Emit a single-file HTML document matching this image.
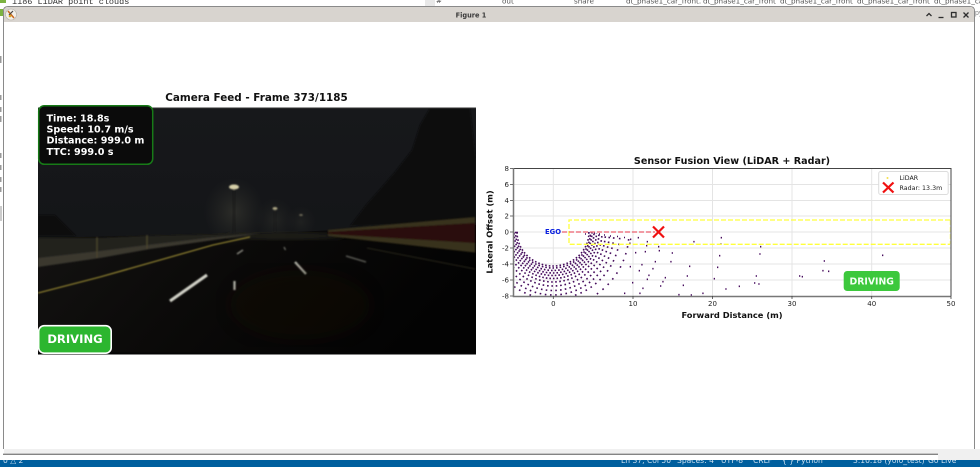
<!DOCTYPE html>
<html><head><meta charset="utf-8"><style>
html,body{margin:0;padding:0;background:#fff;overflow:hidden}
svg{display:block}
text{font-family:"DejaVu Sans",sans-serif}
</style></head><body>
<svg width="980" height="467" viewBox="0 0 980 467" xmlns="http://www.w3.org/2000/svg">
<defs>
<clipPath id="cam"><rect x="38" y="108.500" width="438" height="246"/></clipPath>
<clipPath id="ax"><rect x="513" y="168.500" width="438" height="127.500"/></clipPath>
<clipPath id="arcs"><polygon points="513,232 588,232 631,238 631,296 513,296"/></clipPath>
<clipPath id="st"><rect x="0" y="460" width="980" height="7"/></clipPath>
<filter id="b1"><feGaussianBlur stdDeviation="0.7"/></filter>
<filter id="b0"><feGaussianBlur stdDeviation="0.35"/></filter>
<filter id="b3"><feGaussianBlur stdDeviation="3"/></filter>
<filter id="b8"><feGaussianBlur stdDeviation="8"/></filter>
<linearGradient id="sky" x1="0" y1="0" x2="0" y2="1"><stop offset="0" stop-color="#17181b"/><stop offset="1" stop-color="#111315"/></linearGradient>
<linearGradient id="road" x1="0" y1="0" x2="1" y2="0.25"><stop offset="0" stop-color="#131211"/><stop offset="0.45" stop-color="#0b0a09"/><stop offset="1" stop-color="#030303"/></linearGradient>
<radialGradient id="hz" cx="0.5" cy="0.5" r="0.5"><stop offset="0" stop-color="#3c3c34" stop-opacity=".6"/><stop offset="1" stop-color="#30302b" stop-opacity="0"/></radialGradient>
</defs>
<rect width="980" height="467" fill="#fff"/>

<!-- background editor -->
<text x="12" y="4" font-size="8.500" fill="#333" style="font-family:'Liberation Mono',monospace">1186 LiDAR point clouds</text>
<rect x="425" y="0" width="10" height="6" fill="#e8e8e8"/>
<g font-size="7.200" fill="#555" style="font-family:'Liberation Sans',sans-serif">
<text x="436" y="3">#</text><text x="502" y="3.500">out</text><text x="574" y="3.500">share</text>
<text x="626" y="3.500">dt_phase1_car_front.</text><text x="703" y="3.500">dt_phase1_car_front</text><text x="780" y="3.500">dt_phase1_car_front</text><text x="857" y="3.500">dt_phase1_car_front</text><text x="934" y="3.500">dt_phase1_car_front</text>
</g>
<text x="975" y="15" font-size="7" fill="#888" style="font-family:'Liberation Sans',sans-serif">py</text>
<rect x="0" y="0" width="6" height="3" fill="#7cb342"/><rect x="0" y="9" width="3" height="7" fill="#7cb342"/>
<g fill="#999"><rect x="0" y="56" width="1.500" height="7"/><rect x="0" y="95" width="1.500" height="5"/><rect x="0" y="107" width="1.500" height="5"/><rect x="0" y="116" width="1.500" height="6"/><rect x="0" y="153" width="1.500" height="5"/><rect x="0" y="165" width="1.500" height="5"/><rect x="0" y="177" width="1.500" height="5"/><rect x="0" y="187" width="1.500" height="5"/><rect x="0" y="206" width="2" height="15" fill="#ccc"/></g>

<!-- window -->
<path d="M3.500 449V11Q3.500 6.500 8 6.500H970Q974.500 6.500 974.500 11V449" fill="#fff" stroke="#8a8a8a"/>
<path d="M4 22V11Q4 7 8 7H970Q974 7 974 11V22Z" fill="#d8d4cf"/>
<circle cx="11" cy="14.500" r="5.500" fill="#f2efe9" stroke="#b5b1aa" stroke-width=".6"/>
<path d="M8 11L14 18" stroke="#c9661e" stroke-width="1.500"/><path d="M13 11L9 15" stroke="#444" stroke-width="1.200"/><circle cx="10" cy="16" r="1.300" fill="#d9a520"/>
<text x="471" y="17.500" font-size="6.600" font-weight="bold" fill="#3a3a3a" text-anchor="middle">Figure 1</text>
<g fill="none" stroke="#2e2e2e" stroke-width="1.300"><path d="M926.500 16L929 13.500L931.500 16"/><path d="M938.500 17.500H943.500"/><rect x="951.500" y="12.500" width="4.500" height="4.500"/><path d="M963.500 12.500L968.500 17.500M968.500 12.500L963.500 17.500"/></g>

<!-- camera -->
<text x="256.500" y="101" font-size="10.400" font-weight="bold" fill="#111" text-anchor="middle">Camera Feed - Frame 373/1185</text>
<rect x="38" y="107.500" width="438" height="1" fill="#333"/>
<g clip-path="url(#cam)">
<rect x="38" y="108" width="438" height="247" fill="url(#sky)"/>
<path d="M470 108H430L420 125L412 150L395 172L366 205L350 226L476 222V160Z" fill="#0b0c0e" filter="url(#b1)"/>
<path d="M38 215H55L76 236H38Z" fill="#0a0a0a" filter="url(#b1)"/>
<path d="M38 238H476V355H38Z" fill="url(#road)"/>
<path d="M38 238L262 233L476 225V240H38Z" fill="url(#road)"/>
<ellipse cx="234" cy="212" rx="30" ry="34" fill="url(#hz)"/>
<ellipse cx="275" cy="220" rx="20" ry="22" fill="url(#hz)" opacity=".6"/>
<ellipse cx="301" cy="222" rx="15" ry="16" fill="url(#hz)" opacity=".45"/>
<ellipse cx="285" cy="236" rx="60" ry="3.500" fill="#20201d" filter="url(#b3)"/>
<g filter="url(#b1)">
<path d="M38 238L97 238L147 235.700L262 233L207 238L147 245L100 251L38 258Z" fill="#22221c"/>
<path d="M38 258L100 251L147 245L207 238L262 233L200 242L150 249L100 258L38 267Z" fill="#3a382f"/>
<path d="M97 237V258M147 235V249" stroke="#4c462f" stroke-width="1.200"/>
<path d="M38 293L100 277L153 262L213 245L250 237" stroke="#a39335" stroke-width="1.100" fill="none"/>
<path d="M170 301L207 275" stroke="#d2d2c8" stroke-width="3"/>
<path d="M234.500 281V290" stroke="#bdbdb2" stroke-width="2.200"/>
<path d="M295 262L306 274" stroke="#b5b5aa" stroke-width="2.300"/>
<path d="M237 254L243 250" stroke="#85857c" stroke-width="1.500"/>
<path d="M284 247L285.500 250" stroke="#77776e" stroke-width="1.200"/>
<path d="M346 256L366 262" stroke="#55554f" stroke-width="1.500"/>
<path d="M367 248L475 269" stroke="#26241a" stroke-width="1"/>
<path d="M328 230L475 217V223L328 232Z" fill="#39301a"/>
<path d="M328 232L475 223V243L328 234Z" fill="#2b0f08"/>
<path d="M328 234L475 243V252.500L328 236Z" fill="#39301a"/>
<path d="M234 190V233" stroke="#1c1c18" stroke-width="1.200"/><path d="M275 211V232" stroke="#1c1c18" stroke-width="1"/>
<ellipse cx="234" cy="187" rx="5" ry="2.500" fill="#d6cfa8"/>
<ellipse cx="275" cy="208.500" rx="2.500" ry="1.500" fill="#aaa483"/>
<ellipse cx="301" cy="215" rx="1.800" ry="1" fill="#6c6856"/>
</g>
<ellipse cx="300" cy="305" rx="70" ry="35" fill="#180705" opacity=".35" filter="url(#b8)"/>
<rect x="38" y="352.500" width="438" height="2" fill="#050505"/>
</g>
<rect x="38.700" y="105.800" width="114" height="58.500" rx="5.500" fill="#0b0b0b" stroke="#177a17" stroke-width="1.500"/>
<g font-size="9.600" font-weight="bold" fill="#fff"><text x="46.500" y="121.500">Time: 18.8s</text><text x="46.500" y="132.500">Speed: 10.7 m/s</text><text x="46.500" y="143.700">Distance: 999.0 m</text><text x="46.500" y="155">TTC: 999.0 s</text></g>
<rect x="38.700" y="325.700" width="72.500" height="27.500" rx="5.500" fill="#2cb62f" stroke="#fff" stroke-width="1.600"/>
<text x="75" y="343" font-size="11.600" font-weight="bold" fill="#fff" text-anchor="middle">DRIVING</text>

<!-- plot -->
<text x="732" y="164" font-size="9.600" font-weight="bold" fill="#111" text-anchor="middle">Sensor Fusion View (LiDAR + Radar)</text>
<g stroke="#e4e4e4" stroke-width="1"><path d="M553.300 168.500V296M633 168.500V296M712.500 168.500V296M792 168.500V296M871.700 168.500V296"/><path d="M513 184.500H951M513 200.500H951M513 216H951M513 232H951M513 248H951M513 264H951M513 280H951"/></g>
<g clip-path="url(#ax)" filter="url(#b0)">
<g clip-path="url(#arcs)" fill="none" stroke="#440a5c" stroke-width="1.600" stroke-dasharray="1.600 2">
<ellipse cx="553" cy="232" rx="36" ry="34"/>
<ellipse cx="553" cy="232" rx="37.500" ry="36" stroke-dashoffset="1"/>
<ellipse cx="553" cy="232" rx="39" ry="38.500"/>
<ellipse cx="553" cy="232" rx="41" ry="41" stroke-dashoffset="2"/>
<ellipse cx="553" cy="232" rx="43.500" ry="43.500"/>
<ellipse cx="553" cy="232" rx="46" ry="46.500" stroke-dashoffset="1"/>
<ellipse cx="553" cy="232" rx="49" ry="50" stroke-dasharray="1.600 2.500"/>
<ellipse cx="553" cy="232" rx="52.500" ry="54" stroke-dasharray="1.600 2.800"/>
<ellipse cx="553" cy="232" rx="56.500" ry="58.500" stroke-dasharray="1.600 3.200"/>
<ellipse cx="553" cy="232" rx="61" ry="63" stroke-dasharray="1.600 3.600"/>
<ellipse cx="553" cy="232" rx="67" ry="67" stroke-dasharray="1.600 4.200"/>
<ellipse cx="553" cy="232" rx="76" ry="76" stroke-dasharray="1.600 5.500"/>
</g>
<path d="M515 232.500h3M585 234h1M588 233h1M590 236h1M594 233h1M599 234h1M604 235h1M610 236h1M617 236.500h1M624 237.500h1M760 246.700h1.300M759.300 254h1.300M755.700 276h1.300M754 283h1.300M758.300 284h1.300M738.700 286.300h1.300M799 276h1.300M801.700 276.700h1.300M823.700 261h1.300M822.300 270.700h1.300M828 271.300h1.300M882 255.300h1.300M720.700 237.700h1.300M720.300 244h1.300M719 255.700h1.300M717 267.300h1.300M713.700 278.700h1.300M725.300 289h1.300M702.300 293.300h1.300M690.700 295h1.300M678.300 294.700h1.300M693.300 241.700h1.300M689 266.300h1.300M686.700 276h1.300M682.700 285.300h1.300M671.700 253h1.300M670.300 261.700h1.300M664.700 277.700h1.300M662.300 281.700h1.300M660 286h1.300M658 246.700h1.300M658.700 250.700h1.300M654.700 261.700h1.300M652.300 268.700h1.300M648.300 275.300h1.300M646.700 279.300h1.300M642.300 288.300h1.300M639.300 293.300h1.300M646.700 241.700h1.300M646 245.700h1.300M644.700 251.700h1.300M641.300 264.700h1.300M638.700 270.700h1.300M632 282.700h1.300M624 293.300h1.300M637.700 237.700h1.300M630 239.300h1.300M629.300 243.300h1.300M635 252.700h1.300M629.700 266.700h1.300" stroke="#440a5c" stroke-width="1.600" fill="none"/>
</g>
<path d="M950 220H569V244.300H950" fill="none" stroke="#ffff3c" stroke-width="1.300" stroke-dasharray="5 2"/>
<path d="M950 220V244.300" fill="none" stroke="#ffff3c" stroke-opacity=".4" stroke-width="1" stroke-dasharray="5 2"/>
<path d="M562 232H655" stroke="#ea5f6e" stroke-width="1.200" stroke-dasharray="5 2"/>
<path d="M653 226.500L664 237.500M664 226.500L653 237.500" stroke="#f01010" stroke-width="2.200"/>
<text x="553" y="234" font-size="6.800" font-weight="bold" fill="#0a20e0" text-anchor="middle">EGO</text>
<path d="M513 168.500H951V296" fill="none" stroke="#444" stroke-width="1"/>
<path d="M513.500 168V296.500H951" fill="none" stroke="#777" stroke-width="1.500"/>
<g stroke="#444" stroke-width=".8"><path d="M553.300 296v3M633 296v3M712.500 296v3M792 296v3M871.700 296v3M951 296v3M510 168.500h3M510 184.500h3M510 200.500h3M510 216h3M510 232h3M510 248h3M510 264h3M510 280h3M510 296h3"/></g>
<g font-size="7" fill="#222" text-anchor="middle"><text x="553.300" y="306">0</text><text x="633" y="306">10</text><text x="712.500" y="306">20</text><text x="792" y="306">30</text><text x="871.700" y="306">40</text><text x="951" y="306">50</text></g>
<g font-size="7" fill="#222" text-anchor="end"><text x="509" y="171">8</text><text x="509" y="187">6</text><text x="509" y="203">4</text><text x="509" y="218.500">2</text><text x="509" y="234.500">0</text><text x="509" y="250.500">-2</text><text x="509" y="266.500">-4</text><text x="509" y="282.500">-6</text><text x="509" y="298.500">-8</text></g>
<text x="732" y="318" font-size="8.300" font-weight="bold" fill="#111" text-anchor="middle">Forward Distance (m)</text>
<text transform="translate(492.500 232) rotate(-90)" font-size="8.300" font-weight="bold" fill="#111" text-anchor="middle">Lateral Offset (m)</text>
<rect x="878.700" y="171.500" width="69.500" height="23" rx="2" fill="#fff" stroke="#dcdcdc"/>
<circle cx="887.500" cy="178" r="1" fill="#f5e04a"/>
<path d="M883 182.500L893.500 192.500M893.500 182.500L883 192.500" stroke="#f01010" stroke-width="2.200"/>
<g font-size="6.300" fill="#222"><text x="899.500" y="180">LiDAR</text><text x="899.500" y="190">Radar: 13.3m</text></g>
<rect x="843.700" y="271" width="56" height="20" rx="3.500" fill="#3cc83c"/>
<text x="871.700" y="284.500" font-size="9.300" font-weight="bold" fill="#f4fff4" text-anchor="middle">DRIVING</text>

<!-- bottom -->
<rect x="4" y="449" width="970" height="5" fill="#f0f0f0"/>
<rect x="938" y="449" width="42" height="11" fill="#f0f0f0"/>
<rect x="3" y="453.700" width="935" height="1.100" fill="#666"/>
<rect x="0" y="460" width="980" height="7" fill="#005f9e"/>
<g clip-path="url(#st)" font-size="7.600" fill="#c9dfef" style="font-family:'Liberation Sans',sans-serif">
<text x="3" y="463">0 △ 2</text><text x="621" y="463">Ln 37, Col 50</text><text x="677" y="463">Spaces: 4</text><text x="721" y="463">UTF-8</text><text x="753" y="463">CRLF</text><text x="782" y="463">{ } Python</text><text x="853" y="463">3.10.18 (yolo_test)</text><text x="928" y="463">Go Live</text>
</g>
</svg>
</body></html>
